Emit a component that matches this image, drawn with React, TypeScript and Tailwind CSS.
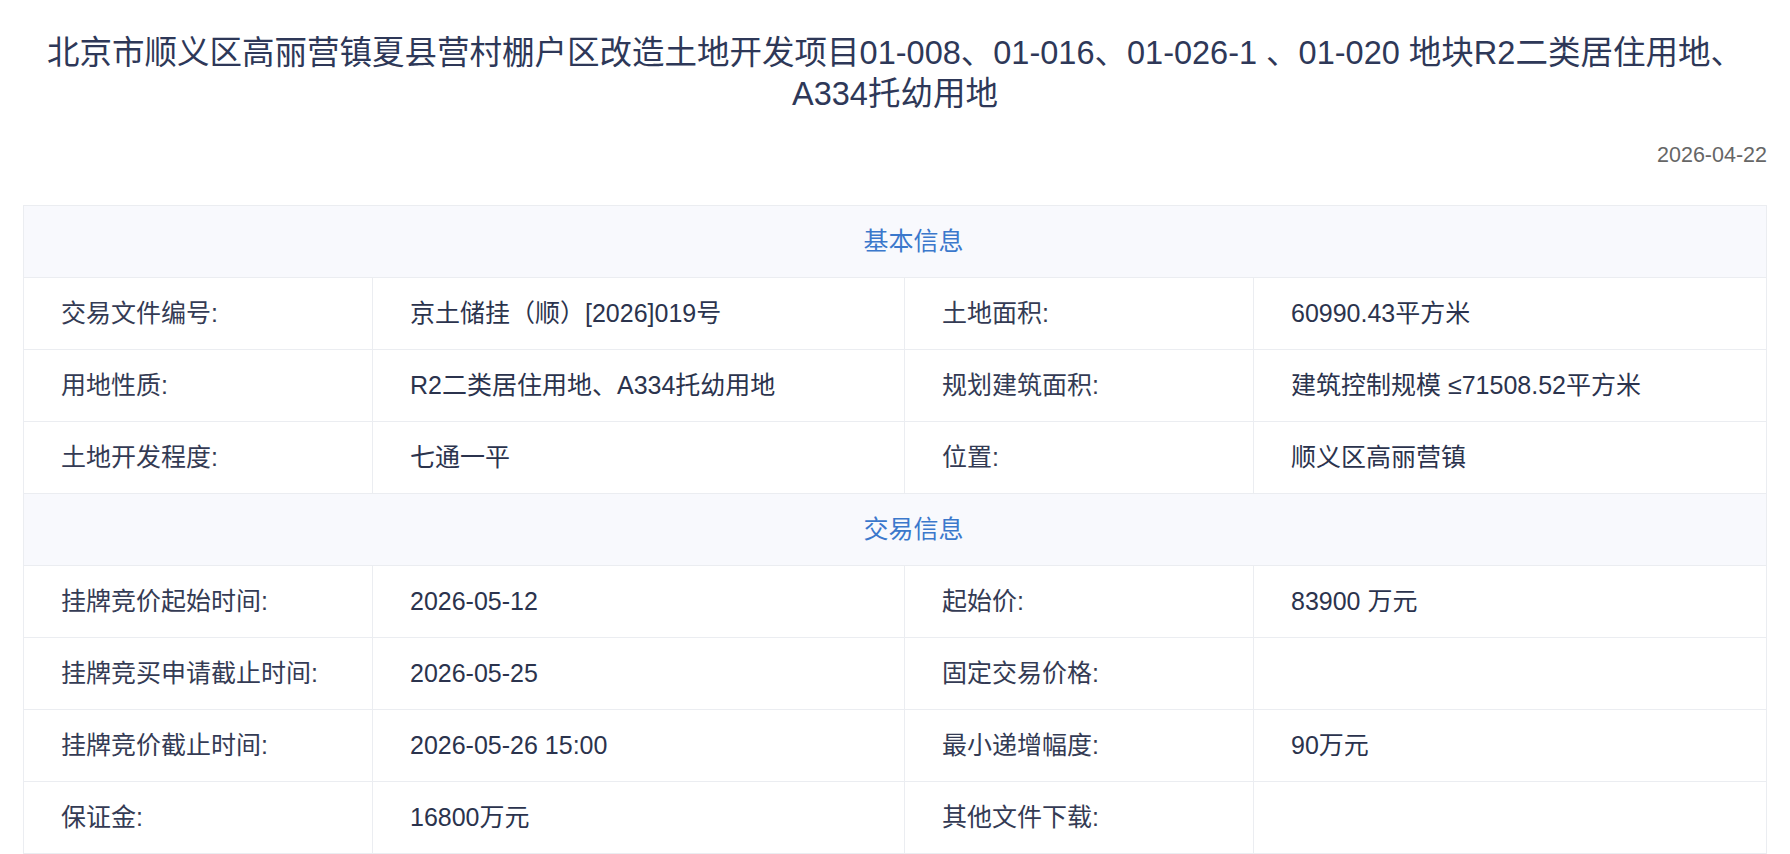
import React from "react";

type Cell = { label: string; value: string };
type Row = [Cell, Cell];

const basic: Row[] = [
  [
    { label: "交易文件编号:", value: "京土储挂（顺）[2026]019号" },
    { label: "土地面积:", value: "60990.43平方米" },
  ],
  [
    { label: "用地性质:", value: "R2二类居住用地、A334托幼用地" },
    { label: "规划建筑面积:", value: "建筑控制规模 ≤71508.52平方米" },
  ],
  [
    { label: "土地开发程度:", value: "七通一平" },
    { label: "位置:", value: "顺义区高丽营镇" },
  ],
];

const trade: Row[] = [
  [
    { label: "挂牌竞价起始时间:", value: "2026-05-12" },
    { label: "起始价:", value: "83900 万元" },
  ],
  [
    { label: "挂牌竞买申请截止时间:", value: "2026-05-25" },
    { label: "固定交易价格:", value: "" },
  ],
  [
    { label: "挂牌竞价截止时间:", value: "2026-05-26 15:00" },
    { label: "最小递增幅度:", value: "90万元" },
  ],
  [
    { label: "保证金:", value: "16800万元" },
    { label: "其他文件下载:", value: "" },
  ],
];

function SectionHead({ title }: { title: string }) {
  return (
    <tr className="h-[72px] bg-[#f8f9fd]">
      <td colSpan={4} className="border border-[#ebedf1] pl-[37px] text-center text-[#3b78cc]">
        {title}
      </td>
    </tr>
  );
}

function InfoRow({ row }: { row: Row }) {
  return (
    <tr className="h-[72px]">
      {row.map((c, i) => (
        <React.Fragment key={i}>
          <td className="border border-[#ebedf1] pl-[37px] text-[#343b54]">{c.label}</td>
          <td className="border border-[#ebedf1] pl-[37px] text-[#2b334d]">{c.value}</td>
        </React.Fragment>
      ))}
    </tr>
  );
}

export default function App() {
  return (
    <div className="min-h-screen bg-white px-[23px] font-['Liberation_Sans','Noto_Sans_CJK_SC',sans-serif]">
      {/* Title */}
      <h1 className="pt-[33px] text-center text-[32.5px] leading-[41px] font-normal text-[#2e3858]">
        北京市顺义区高丽营镇夏县营村棚户区改造土地开发项目01-008、01-016、01-026-1 、01-020 地块R2二类居住用地、A334托幼用地
      </h1>
      <div className="mt-[28px] text-right text-[21.5px] leading-[24px] text-[#666666]">2026-04-22</div>

      {/* Detail table */}
      <table className="mt-[38px] w-full table-fixed border-collapse text-[25px]">
        <colgroup>
          <col className="w-[349px]" />
          <col className="w-[532px]" />
          <col className="w-[349px]" />
          <col />
        </colgroup>
        <tbody>
          <SectionHead title="基本信息" />
          {basic.map((r, i) => (
            <InfoRow key={i} row={r} />
          ))}
          <SectionHead title="交易信息" />
          {trade.map((r, i) => (
            <InfoRow key={i} row={r} />
          ))}
        </tbody>
      </table>
    </div>
  );
}
